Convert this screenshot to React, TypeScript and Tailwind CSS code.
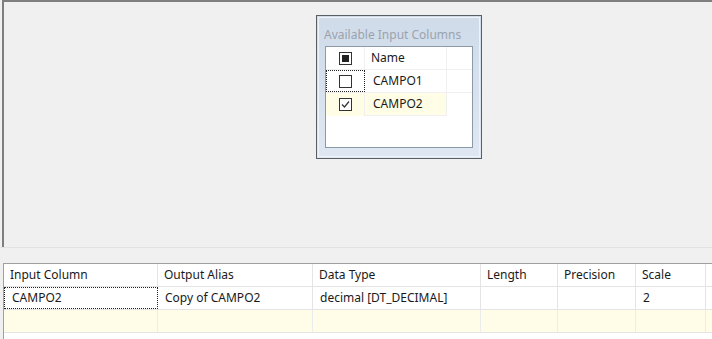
import React from 'react'

const font = { fontFamily: '"Segoe UI", "Noto Sans", "Open Sans", sans-serif' }

const columns = [
  { label: 'Input Column', w: 'w-[154px]' },
  { label: 'Output Alias', w: 'w-[155px]' },
  { label: 'Data Type', w: 'w-[168px]' },
  { label: 'Length', w: 'w-[77px]' },
  { label: 'Precision', w: 'w-[78px]' },
  { label: 'Scale', w: 'w-[70px]' },
]

const row = ['CAMPO2', 'Copy of CAMPO2', 'decimal [DT_DECIMAL]', '', '', '2']

function Box({ state }: { state: 'none' | 'checked' | 'partial' }) {
  return (
    <svg width="13" height="13" viewBox="0 0 13 13">
      <rect x="0.5" y="0.5" width="12" height="12" fill="#fff" stroke="#333" />
      {state === 'partial' && <rect x="3" y="3" width="7" height="7" fill="#222" />}
      {state === 'checked' && <path d="M3 6.5 L5.5 9 L10 3.5" fill="none" stroke="#333" strokeWidth="1.2" />}
    </svg>
  )
}

export default function App() {
  return (
    <div className="w-[712px] h-[339px] bg-[#f0f0f0] text-[12px] text-[#1a1a1a] overflow-hidden" style={font}>
      <div className="relative ml-[2px] h-[247px] border-l-2 border-t-2 border-[#7f7f7f] bg-[#f0f0f0]">
        <div className="absolute left-[312px] top-[13px] w-[166px] h-[144px] border border-[#5a5f66] bg-gradient-to-b from-[#cfdbe9] to-[#dfe8f2] p-[1px]">
          <div className="h-full border border-[#eef3f8] px-[6px] pt-[9px]">
            <div className="text-[#9aa3ad] leading-[16px] h-[19px] -ml-[1px]">Available Input Columns</div>
            <div className="h-[102px] border border-[#8c9aa8] bg-white">
              <div className="flex h-[23px] border-b border-[#f0f0f0]">
                <div className="w-[39px] flex items-center justify-center border-r border-[#f0f0f0]"><Box state="partial" /></div>
                <div className="w-[82px] flex items-center pl-[6px] border-r border-[#f0f0f0]">Name</div>
              </div>
              <div className="flex h-[23px] border-b border-[#f0f0f0]">
                <div className="w-[39px] flex items-center justify-center border border-dotted border-[#222]"><Box state="none" /></div>
                <div className="w-[82px] flex items-center pl-[8px] border-r border-[#f0f0f0]">CAMPO1</div>
              </div>
              <div className="flex h-[23px] bg-[#fffde6] w-[121px]">
                <div className="w-[39px] flex items-center justify-center border-r border-[#f0f0f0]"><Box state="checked" /></div>
                <div className="w-[82px] flex items-center pl-[8px] border-r border-[#f0f0f0] border-b">CAMPO2</div>
              </div>
            </div>
          </div>
        </div>
      </div>
      <div className="h-[16px] border-t border-[#e2e2e2]" />
      <div className="ml-[3px] h-[76px] border-t border-l border-[#a0a0a0] bg-white">
        <div className="flex h-[23px] border-b border-[#e4e4e4]">
          {columns.map(c => (
            <div key={c.label} className={`${c.w} flex items-center pl-[6px] border-r border-[#e4e4e4]`}>{c.label}</div>
          ))}
        </div>
        <div className="flex h-[23px] border-b border-[#e4e4e4]">
          {row.map((v, i) => (
            <div
              key={i}
              className={`${columns[i].w} flex items-center pl-[7px] ${i === 0 ? 'border border-dotted border-[#222]' : 'border-r border-[#e4e4e4]'}`}
            >
              {v}
            </div>
          ))}
        </div>
        <div className="flex h-[23px] bg-[#fffde8] border-b border-[#e4e4e4]">
          {columns.map(c => (
            <div key={c.label} className={`${c.w} border-r border-[#ececec]`} />
          ))}
        </div>
      </div>
    </div>
  )
}
